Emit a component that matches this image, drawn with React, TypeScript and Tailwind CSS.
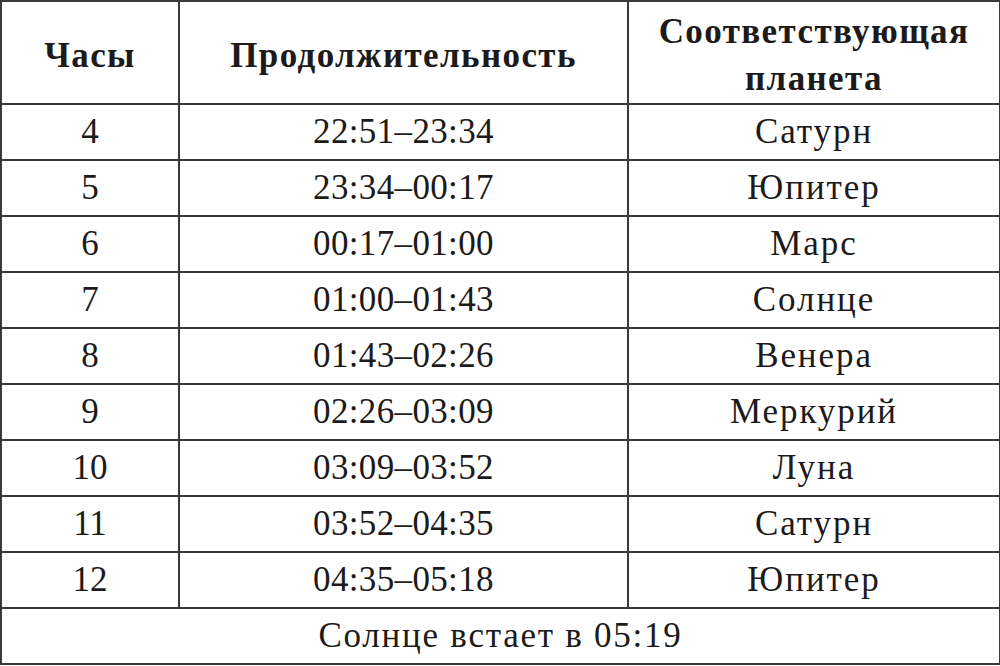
const rows = [
  ["4", "22:51–23:34", "Сатурн"],
  ["5", "23:34–00:17", "Юпитер"],
  ["6", "00:17–01:00", "Марс"],
  ["7", "01:00–01:43", "Солнце"],
  ["8", "01:43–02:26", "Венера"],
  ["9", "02:26–03:09", "Меркурий"],
  ["10", "03:09–03:52", "Луна"],
  ["11", "03:52–04:35", "Сатурн"],
  ["12", "04:35–05:18", "Юпитер"],
];

export default function App() {
  return (
    <div className="w-[1000px] h-[666px] bg-white text-[#1c1a1a] font-['Liberation_Serif',serif]">
      <table className="w-[999px] border-collapse table-fixed">
        <colgroup>
          <col className="w-[178px]" />
          <col className="w-[449px]" />
          <col className="w-[372px]" />
        </colgroup>
        <thead>
          <tr className="h-[103px]">
            <th className="border-2 border-[#3a3a3a] text-[35px] font-bold tracking-[0.04em] pt-[8px]">Часы</th>
            <th className="border-2 border-[#3a3a3a] text-[35px] font-bold tracking-[0.04em] pt-[8px]">
              Продолжительность
            </th>
            <th className="border-2 border-[#3a3a3a] text-[35px] font-bold tracking-[0.04em] leading-[47px] pt-[4px]">
              Соответствующая
              <br />
              планета
            </th>
          </tr>
        </thead>
        <tbody>
          {rows.map(([hour, span, planet]) => (
            <tr key={hour + span} className="h-[56px]">
              <td className="border-2 border-[#3a3a3a] text-center text-[35px]">{hour}</td>
              <td className="border-2 border-[#3a3a3a] text-center text-[35px] tracking-[0.01em]">{span}</td>
              <td className="border-2 border-[#3a3a3a] text-center text-[35px] tracking-[0.055em]">{planet}</td>
            </tr>
          ))}
          <tr className="h-[56px]">
            <td colSpan={3} className="border-2 border-[#3a3a3a] text-center text-[35px] tracking-[0.05em]">
              Солнце встает в 05:19
            </td>
          </tr>
        </tbody>
      </table>
    </div>
  );
}
